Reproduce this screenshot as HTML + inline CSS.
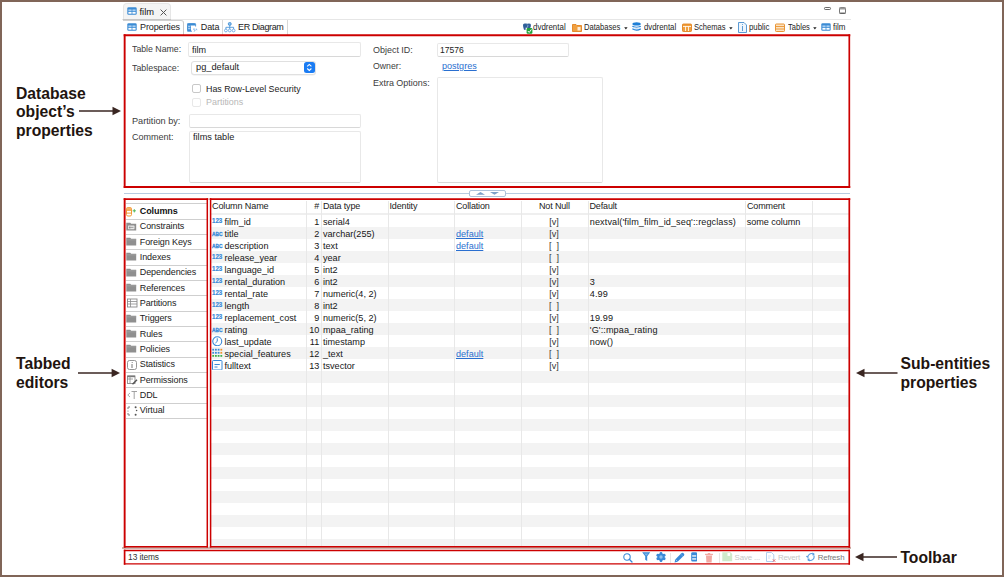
<!DOCTYPE html>
<html><head><meta charset="utf-8"><style>
html,body{margin:0;padding:0;}
body{width:1004px;height:577px;position:relative;overflow:hidden;background:#fff;font-family:"Liberation Sans", sans-serif;}
.frame{position:absolute;left:0;top:0;width:1004px;height:577px;box-sizing:border-box;border:2px solid #806558;z-index:50;pointer-events:none}
.t{position:absolute;white-space:nowrap;line-height:12px;}
.b{position:absolute;}
</style></head><body>
<div class="t" style="left:16.00px;top:87.56px;font-size:15.7px;color:#22140f;font-weight:bold;letter-spacing:0px;">Database</div>
<div class="t" style="left:16.00px;top:106.26px;font-size:15.7px;color:#22140f;font-weight:bold;letter-spacing:0px;">object&#8217;s</div>
<div class="t" style="left:16.00px;top:124.96px;font-size:15.7px;color:#22140f;font-weight:bold;letter-spacing:0px;">properties</div>
<div class="t" style="left:16.00px;top:357.96px;font-size:15.7px;color:#22140f;font-weight:bold;letter-spacing:0px;">Tabbed</div>
<div class="t" style="left:16.00px;top:376.96px;font-size:15.7px;color:#22140f;font-weight:bold;letter-spacing:0px;">editors</div>
<div class="t" style="left:900.50px;top:358.06px;font-size:15.7px;color:#22140f;font-weight:bold;letter-spacing:0px;">Sub-entities</div>
<div class="t" style="left:900.50px;top:377.06px;font-size:15.7px;color:#22140f;font-weight:bold;letter-spacing:0px;">properties</div>
<div class="t" style="left:900.40px;top:552.36px;font-size:15.7px;color:#22140f;font-weight:bold;letter-spacing:0px;">Toolbar</div>
<svg class="b" style="left:79px;top:106.3px" width="42" height="10" viewBox="0 0 42 10"><line x1="0" y1="5" x2="36" y2="5" stroke="#3a2622" stroke-width="1.7"/><path d="M33.5 0.8 L42 5 L33.5 9.2 Z" fill="#3a2622"/></svg>
<svg class="b" style="left:78.4px;top:368.2px" width="42.099999999999994" height="10" viewBox="0 0 42.099999999999994 10"><line x1="0" y1="5" x2="36.099999999999994" y2="5" stroke="#3a2622" stroke-width="1.7"/><path d="M33.599999999999994 0.8 L42.099999999999994 5 L33.599999999999994 9.2 Z" fill="#3a2622"/></svg>
<svg class="b" style="left:856px;top:368.3px" width="41.5" height="10" viewBox="0 0 41.5 10"><line x1="6" y1="5" x2="41.5" y2="5" stroke="#3a2622" stroke-width="1.7"/><path d="M8.5 0.8 L0 5 L8.5 9.2 Z" fill="#3a2622"/></svg>
<svg class="b" style="left:855px;top:552px" width="42" height="10" viewBox="0 0 42 10"><line x1="6" y1="5" x2="42" y2="5" stroke="#3a2622" stroke-width="1.7"/><path d="M8.5 0.8 L0 5 L8.5 9.2 Z" fill="#3a2622"/></svg>
<div class="b" style="left:123px;top:2.5px;width:48px;height:16.5px;background:#f4f4f4;border:1px solid #e6e6e6;border-bottom:none;border-radius:4px 4px 0 0;box-sizing:border-box"></div>
<div class="b" style="left:122px;top:18.5px;width:729px;height:1px;background:#e6e6e6"></div>
<div class="b" style="left:123px;top:19px;width:48px;height:1.5px;background:#c4c4c4"></div>
<svg class="b" style="left:126.7px;top:7.2px" width="10" height="8" viewBox="0 0 10 8"><rect x="0.3" y="0.3" width="9.4" height="7.4" rx="1.3" fill="#3b8bd4"/><rect x="1.4" y="2.4" width="3.2" height="1.9" fill="#a9cff2"/><rect x="5.4" y="2.4" width="3.2" height="1.9" fill="#a9cff2"/><rect x="1.4" y="5" width="3.2" height="1.7" fill="#fff"/><rect x="5.4" y="5" width="3.2" height="1.7" fill="#fff"/></svg>
<div class="t" style="left:139.50px;top:5.58px;font-size:9.3px;color:#111;font-weight:normal;letter-spacing:0px;">film</div>
<svg class="b" style="left:159.5px;top:8.5px" width="7" height="7" viewBox="0 0 7 7"><path d="M0.6 0.6 L6.4 6.4 M6.4 0.6 L0.6 6.4" stroke="#555" stroke-width="1"/></svg>
<div class="b" style="left:824px;top:7px;width:7px;height:3px;border:1px solid #6a6a6a;box-sizing:border-box;border-radius:1.2px"></div>
<svg class="b" style="left:838.5px;top:7px" width="7" height="7" viewBox="0 0 7 7"><rect x="0.5" y="0.5" width="6" height="6" rx="1" fill="#fff" stroke="#777" stroke-width="1"/><rect x="0.5" y="0.5" width="6" height="2" fill="#999"/><rect x="0.5" y="5.6" width="6" height="1" fill="#555"/></svg>
<div class="b" style="left:123px;top:19.5px;width:61px;height:15px;border-right:1px solid #c8c8c8;border-top:1px solid #d0d0d0;border-radius:0 3px 0 0;box-sizing:border-box;background:#fff"></div>
<div class="b" style="left:221.5px;top:20px;width:1px;height:14.5px;background:#d8d8d8"></div>
<div class="b" style="left:287px;top:20px;width:1px;height:14.5px;background:#d8d8d8"></div>
<svg class="b" style="left:126.7px;top:23.2px" width="10" height="8" viewBox="0 0 10 8"><rect x="0.3" y="0.3" width="9.4" height="7.4" rx="1.3" fill="#3b8bd4"/><rect x="1.4" y="2.4" width="3.2" height="1.9" fill="#a9cff2"/><rect x="5.4" y="2.4" width="3.2" height="1.9" fill="#a9cff2"/><rect x="1.4" y="5" width="3.2" height="1.7" fill="#fff"/><rect x="5.4" y="5" width="3.2" height="1.7" fill="#fff"/></svg>
<div class="t" style="left:140.00px;top:21.18px;font-size:9px;color:#222;font-weight:normal;letter-spacing:-0.1px;">Properties</div>
<svg class="b" style="left:186.8px;top:23px" width="11" height="9" viewBox="0 0 11 9"><path d="M0.4 7.6 V1.4 Q0.4 0.4 1.4 0.4 H7.6 Q8.6 0.4 8.6 1.4 V3.5" fill="none" stroke="#3b8bd4" stroke-width="0.9"/><rect x="0.4" y="0.4" width="8.2" height="2" rx="0.8" fill="#3b8bd4"/><rect x="0.4" y="2.4" width="3.6" height="5.8" fill="#3b8bd4"/><rect x="1.1" y="3" width="2.3" height="1.3" fill="#a9cff2"/><rect x="1.1" y="5" width="2.3" height="1.3" fill="#a9cff2"/><path d="M0.4 8.2 H5" stroke="#3b8bd4" stroke-width="0.9"/><path d="M6 6.2 Q7.5 5.5 8.2 6.8 L7.2 8.6 M9.3 5.6 L9.9 7.2" stroke="#5a9ee0" stroke-width="0.8" fill="none"/></svg>
<div class="t" style="left:200.80px;top:21.18px;font-size:9px;color:#222;font-weight:normal;letter-spacing:-0.1px;">Data</div>
<svg class="b" style="left:224px;top:22px" width="11.5" height="10.5" viewBox="0 0 11.5 10.5"><circle cx="5.75" cy="1.9" r="1.5" fill="#8cc0ee" stroke="#3b8bd4" stroke-width="0.8"/><path d="M5.75 3.4 V5.3 M1.9 7.2 V5.3 H9.6 V7.2 M5.75 5.3 V7.2" stroke="#3b8bd4" stroke-width="0.8" fill="none"/><circle cx="1.9" cy="8.5" r="1.4" fill="#fff" stroke="#5a9ee0" stroke-width="0.8"/><circle cx="5.75" cy="8.5" r="1.4" fill="#fff" stroke="#5a9ee0" stroke-width="0.8"/><circle cx="9.6" cy="8.5" r="1.4" fill="#fff" stroke="#5a9ee0" stroke-width="0.8"/></svg>
<div class="t" style="left:238.00px;top:21.18px;font-size:9px;color:#222;font-weight:normal;letter-spacing:-0.35px;">ER Diagram</div>
<svg class="b" style="left:521.5px;top:22.5px" width="11" height="11" viewBox="0 0 11 11"><path d="M1 2 Q1 0.3 3 0.5 Q4.5 0.2 5.5 0.8 Q7 0.2 8.3 0.8 Q9.3 1.6 8.8 3.5 Q8.5 5 7.5 5.5 L7 7 L5.6 6.8 L5.5 4.5 Q4.5 4.8 3.8 4.5 L3.5 7 L2 6.8 Q1 4.5 1 2 Z" fill="#2f5f9a"/><path d="M5.2 1.6 Q6.5 2.5 5.5 4" stroke="#cfe0f2" stroke-width="0.6" fill="none"/><rect x="4.6" y="5" width="5.8" height="5.8" rx="1.2" fill="#22a33a"/><path d="M5.8 8 L7.2 9.4 L9.4 6.5" stroke="#fff" stroke-width="1" fill="none"/></svg>
<div class="t" style="left:532.80px;top:22.16px;font-size:8.2px;color:#1e1e1e;font-weight:normal;letter-spacing:0px;transform:scaleX(0.9691);transform-origin:0 0;">dvdrental</div>
<svg class="b" style="left:571.7px;top:23px" width="10" height="9" viewBox="0 0 10 9"><path d="M0.5 1.5 H4 L5 2.5 H9.5 V8.5 H0.5 Z" fill="#f0a040" stroke="#e07a10" stroke-width="0.8"/><rect x="5.5" y="4" width="3" height="3.5" fill="#fff" opacity=".8"/></svg>
<div class="t" style="left:583.70px;top:22.16px;font-size:8.2px;color:#1e1e1e;font-weight:normal;letter-spacing:0px;transform:scaleX(0.9287);transform-origin:0 0;">Databases</div>
<svg class="b" style="left:624px;top:26.6px" width="4" height="3" viewBox="0 0 4 3"><path d="M0.2 0.2 H3.6 L1.9 2.6 Z" fill="#222"/></svg>
<svg class="b" style="left:631.8px;top:22.4px" width="9.2" height="9.8" viewBox="0 0 9.2 9.8"><ellipse cx="4.6" cy="1.9" rx="4.2" ry="1.6" fill="#1f7fd6"/><path d="M0.4 4.2 Q4.6 6.6 8.8 4.2" stroke="#1f7fd6" stroke-width="1.2" fill="none"/><path d="M0.4 6.8 Q4.6 9.4 8.8 6.8" stroke="#1f7fd6" stroke-width="1.3" fill="none"/><path d="M1 4.8 Q4.6 6.2 8.2 4.8 V6 Q4.6 7.6 1 6 Z" fill="#c6def5"/></svg>
<div class="t" style="left:643.70px;top:22.16px;font-size:8.2px;color:#1e1e1e;font-weight:normal;letter-spacing:0px;transform:scaleX(0.9543);transform-origin:0 0;">dvdrental</div>
<svg class="b" style="left:682.2px;top:23px" width="10" height="9" viewBox="0 0 10 9"><rect x="0.5" y="1" width="9" height="7.5" rx="0.8" fill="#f0a040" stroke="#e07a10" stroke-width="0.8"/><path d="M1 3.5 H9 M3.5 3.5 V8 M6.5 3.5 V8" stroke="#fff" stroke-width="0.8"/></svg>
<div class="t" style="left:694.40px;top:22.16px;font-size:8.2px;color:#1e1e1e;font-weight:normal;letter-spacing:0px;transform:scaleX(0.9271);transform-origin:0 0;">Schemas</div>
<svg class="b" style="left:729px;top:26.6px" width="4" height="3" viewBox="0 0 4 3"><path d="M0.2 0.2 H3.6 L1.9 2.6 Z" fill="#222"/></svg>
<svg class="b" style="left:737.7px;top:22px" width="9" height="11" viewBox="0 0 9 11"><path d="M0.5 0.5 H6 L8.5 3 V10.5 H0.5 Z" fill="#eef5fc" stroke="#4a90d0" stroke-width="0.9"/><path d="M4.5 4 V9" stroke="#4a90d0" stroke-width="0.9"/><circle cx="4.5" cy="2.6" r="0.5" fill="#4a90d0"/></svg>
<div class="t" style="left:748.50px;top:22.16px;font-size:8.2px;color:#1e1e1e;font-weight:normal;letter-spacing:0px;transform:scaleX(0.9607);transform-origin:0 0;">public</div>
<svg class="b" style="left:775.4px;top:23px" width="10" height="9" viewBox="0 0 10 9"><rect x="0.5" y="1" width="9" height="7.5" rx="0.8" fill="#fbe3c4" stroke="#e88a20" stroke-width="0.9"/><path d="M1 3.5 H9 M1 6 H9" stroke="#e88a20" stroke-width="0.8"/></svg>
<div class="t" style="left:787.60px;top:22.16px;font-size:8.2px;color:#1e1e1e;font-weight:normal;letter-spacing:0px;transform:scaleX(0.9241);transform-origin:0 0;">Tables</div>
<svg class="b" style="left:813px;top:26.6px" width="4" height="3" viewBox="0 0 4 3"><path d="M0.2 0.2 H3.6 L1.9 2.6 Z" fill="#222"/></svg>
<svg class="b" style="left:821.1px;top:23.3px" width="10" height="8" viewBox="0 0 10 8"><rect x="0.3" y="0.3" width="9.4" height="7.4" rx="1.3" fill="#3b8bd4"/><rect x="1.4" y="2.4" width="3.2" height="1.9" fill="#a9cff2"/><rect x="5.4" y="2.4" width="3.2" height="1.9" fill="#a9cff2"/><rect x="1.4" y="5" width="3.2" height="1.7" fill="#fff"/><rect x="5.4" y="5" width="3.2" height="1.7" fill="#fff"/></svg>
<div class="t" style="left:833.00px;top:22.16px;font-size:8.2px;color:#1e1e1e;font-weight:normal;letter-spacing:0px;transform:scaleX(0.9803);transform-origin:0 0;">film</div>
<div class="t" style="left:132.00px;top:43.40px;font-size:9.8px;color:#3c3c3c;font-weight:normal;letter-spacing:0px;transform:scaleX(0.8941);transform-origin:0 0;">Table Name:</div>
<div class="b" style="left:188px;top:42px;width:173px;height:14.5px;border:1px solid #e8e8e8;border-bottom-color:#d8d8d8;border-radius:2px;box-sizing:border-box;background:#fff"></div>
<div class="t" style="left:191.70px;top:43.60px;font-size:9.8px;color:#222;font-weight:normal;letter-spacing:0px;transform:scaleX(0.9253);transform-origin:0 0;">film</div>
<div class="t" style="left:132.00px;top:62.00px;font-size:9.8px;color:#3c3c3c;font-weight:normal;letter-spacing:0px;transform:scaleX(0.9028);transform-origin:0 0;">Tablespace:</div>
<div class="b" style="left:190.5px;top:60.5px;width:125px;height:14px;border:1px solid #e0e0e0;border-radius:3px;box-sizing:border-box;background:#fff;box-shadow:0 0.5px 0.5px rgba(0,0,0,.08)"></div>
<div class="t" style="left:196.30px;top:60.90px;font-size:9.8px;color:#222;font-weight:normal;letter-spacing:0px;transform:scaleX(0.9439);transform-origin:0 0;">pg_default</div>
<div class="b" style="left:304px;top:62px;width:10.6px;height:10.6px;background:#1b7cf3;border-radius:2.5px"></div>
<svg class="b" style="left:304px;top:62px" width="11" height="11" viewBox="0 0 11 11"><path d="M3.2 4.3 L5.3 2.4 L7.4 4.3 M3.2 6.5 L5.3 8.4 L7.4 6.5" stroke="#fff" stroke-width="1.1" fill="none"/></svg>
<div class="b" style="left:192px;top:84px;width:9px;height:9px;border:1px solid #c8c8c8;border-radius:2px;box-sizing:border-box;background:#fff"></div>
<div class="t" style="left:205.70px;top:82.90px;font-size:9.8px;color:#222;font-weight:normal;letter-spacing:0px;transform:scaleX(0.9047);transform-origin:0 0;">Has Row-Level Security</div>
<div class="b" style="left:192px;top:97.5px;width:9px;height:9px;border:1px solid #e8e8e8;border-radius:2px;box-sizing:border-box;background:#fff"></div>
<div class="t" style="left:205.70px;top:96.20px;font-size:9.8px;color:#b8b8b8;font-weight:normal;letter-spacing:0px;transform:scaleX(0.9127);transform-origin:0 0;">Partitions</div>
<div class="t" style="left:131.50px;top:115.10px;font-size:9.8px;color:#3c3c3c;font-weight:normal;letter-spacing:0px;transform:scaleX(0.9354);transform-origin:0 0;">Partition by:</div>
<div class="b" style="left:189px;top:113.5px;width:172px;height:14px;border:1px solid #e8e8e8;border-bottom-color:#d8d8d8;border-radius:2px;box-sizing:border-box;background:#fff"></div>
<div class="t" style="left:131.50px;top:131.20px;font-size:9.8px;color:#3c3c3c;font-weight:normal;letter-spacing:0px;transform:scaleX(0.9208);transform-origin:0 0;">Comment:</div>
<div class="b" style="left:189px;top:131px;width:172px;height:52px;border:1px solid #e8e8e8;border-bottom-color:#d8d8d8;border-radius:2px;box-sizing:border-box;background:#fff"></div>
<div class="t" style="left:192.70px;top:131.10px;font-size:9.8px;color:#222;font-weight:normal;letter-spacing:0px;transform:scaleX(0.9365);transform-origin:0 0;">films table</div>
<div class="t" style="left:372.80px;top:43.60px;font-size:9.8px;color:#3c3c3c;font-weight:normal;letter-spacing:0px;transform:scaleX(0.9137);transform-origin:0 0;">Object ID:</div>
<div class="b" style="left:437px;top:42.5px;width:132px;height:14px;border:1px solid #e8e8e8;border-bottom-color:#d8d8d8;border-radius:2px;box-sizing:border-box;background:#fff"></div>
<div class="t" style="left:440.30px;top:43.80px;font-size:9.8px;color:#222;font-weight:normal;letter-spacing:0px;transform:scaleX(0.8699);transform-origin:0 0;">17576</div>
<div class="t" style="left:372.80px;top:60.40px;font-size:9.8px;color:#3c3c3c;font-weight:normal;letter-spacing:0px;transform:scaleX(0.8891);transform-origin:0 0;">Owner:</div>
<div class="t" style="left:442.40px;top:60.10px;font-size:9.8px;color:#2a6fd0;font-weight:normal;letter-spacing:0px;text-decoration:underline;transform:scaleX(0.9233);transform-origin:0 0;">postgres</div>
<div class="t" style="left:372.80px;top:76.60px;font-size:9.8px;color:#3c3c3c;font-weight:normal;letter-spacing:0px;transform:scaleX(0.9133);transform-origin:0 0;">Extra Options:</div>
<div class="b" style="left:437px;top:76.5px;width:166px;height:106px;border:1px solid #e8e8e8;border-bottom-color:#d8d8d8;border-radius:2px;box-sizing:border-box;background:#fff"></div>
<div class="b" style="left:124px;top:193px;width:726px;height:1px;background:#b8cbe0"></div>
<div class="b" style="left:469.2px;top:190px;width:36.6px;height:6.8px;border:1px solid #adc2da;border-radius:2px;box-sizing:border-box;background:#fff"></div>
<svg class="b" style="left:476px;top:192px" width="23" height="3" viewBox="0 0 23 3"><path d="M0 2.7 L4.5 0 L9 2.7 Z M14 0 H23 L18.5 2.7 Z" fill="#7ea0c8"/></svg>
<div class="b" style="left:126px;top:203.2px;width:81px;height:1px;background:#cfcfcf"></div>
<div class="t" style="left:139.80px;top:204.88px;font-size:9px;color:#111;font-weight:bold;letter-spacing:-0.1px;">Columns</div>
<svg class="b" style="left:126px;top:207.0px" width="11" height="10" viewBox="0 0 11 10"><rect x="0.5" y="0.5" width="5" height="8.5" rx="1.4" fill="#fff" stroke="#f29a35" stroke-width="1"/><rect x="0.5" y="0.5" width="5" height="2.6" rx="1" fill="#f6b46a"/><path d="M0.5 3.3 H5.5 M0.5 6.1 H5.5" stroke="#f29a35" stroke-width="1"/><path d="M8.3 2.2 V5.4 M6.7 3.8 H9.9" stroke="#52b85a" stroke-width="1"/></svg>
<div class="b" style="left:126px;top:218.54999999999998px;width:81px;height:1px;background:#cfcfcf"></div>
<div class="t" style="left:139.80px;top:220.23px;font-size:9px;color:#222;font-weight:normal;letter-spacing:-0.1px;">Constraints</div>
<svg class="b" style="left:126.3px;top:221.54999999999998px" width="11" height="10" viewBox="0 0 11 10"><path d="M0.3 0.8 H4.2 L5.2 1.8 H10.2 V8.6 H0.3 Z" fill="#8f8f8f"/><rect x="2" y="3.6" width="6.5" height="3.6" rx="0.6" fill="#e6e6e6"/><circle cx="3.8" cy="5.4" r="1" fill="#8f8f8f"/><path d="M4.8 5.4 H7.5" stroke="#8f8f8f" stroke-width="0.8"/></svg>
<div class="b" style="left:126px;top:233.89999999999998px;width:81px;height:1px;background:#cfcfcf"></div>
<div class="t" style="left:139.80px;top:235.58px;font-size:9px;color:#222;font-weight:normal;letter-spacing:-0.1px;">Foreign Keys</div>
<svg class="b" style="left:126.3px;top:236.89999999999998px" width="11" height="10" viewBox="0 0 11 10"><path d="M0.3 0.8 H4.2 L5.2 1.8 H10.2 V8.6 H0.3 Z" fill="#8f8f8f"/><rect x="0.3" y="2.6" width="9.9" height="0.6" fill="#a8a8a8"/></svg>
<div class="b" style="left:126px;top:249.25px;width:81px;height:1px;background:#cfcfcf"></div>
<div class="t" style="left:139.80px;top:250.93px;font-size:9px;color:#222;font-weight:normal;letter-spacing:-0.1px;">Indexes</div>
<svg class="b" style="left:126.3px;top:252.25px" width="11" height="10" viewBox="0 0 11 10"><path d="M0.3 0.8 H4.2 L5.2 1.8 H10.2 V8.6 H0.3 Z" fill="#8f8f8f"/><rect x="0.3" y="2.6" width="9.9" height="0.6" fill="#a8a8a8"/></svg>
<div class="b" style="left:126px;top:264.59999999999997px;width:81px;height:1px;background:#cfcfcf"></div>
<div class="t" style="left:139.80px;top:266.28px;font-size:9px;color:#222;font-weight:normal;letter-spacing:-0.1px;">Dependencies</div>
<svg class="b" style="left:126.3px;top:267.59999999999997px" width="11" height="10" viewBox="0 0 11 10"><path d="M0.3 0.8 H4.2 L5.2 1.8 H10.2 V8.6 H0.3 Z" fill="#8f8f8f"/><rect x="0.3" y="2.6" width="9.9" height="0.6" fill="#a8a8a8"/></svg>
<div class="b" style="left:126px;top:279.95px;width:81px;height:1px;background:#cfcfcf"></div>
<div class="t" style="left:139.80px;top:281.63px;font-size:9px;color:#222;font-weight:normal;letter-spacing:-0.1px;">References</div>
<svg class="b" style="left:126.3px;top:282.95px" width="11" height="10" viewBox="0 0 11 10"><path d="M0.3 0.8 H4.2 L5.2 1.8 H10.2 V8.6 H0.3 Z" fill="#8f8f8f"/><rect x="0.3" y="2.6" width="9.9" height="0.6" fill="#a8a8a8"/></svg>
<div class="b" style="left:126px;top:295.29999999999995px;width:81px;height:1px;background:#cfcfcf"></div>
<div class="t" style="left:139.80px;top:296.98px;font-size:9px;color:#222;font-weight:normal;letter-spacing:-0.1px;">Partitions</div>
<svg class="b" style="left:126.5px;top:298.29999999999995px" width="11" height="10" viewBox="0 0 11 10"><rect x="0.5" y="1" width="9.5" height="8" fill="none" stroke="#8a8a8a" stroke-width="0.9"/><path d="M0.5 3.5 H10 M0.5 6 H10 M3.5 1 V9" stroke="#8a8a8a" stroke-width="0.8"/></svg>
<div class="b" style="left:126px;top:310.65px;width:81px;height:1px;background:#cfcfcf"></div>
<div class="t" style="left:139.80px;top:312.33px;font-size:9px;color:#222;font-weight:normal;letter-spacing:-0.1px;">Triggers</div>
<svg class="b" style="left:126.3px;top:313.65px" width="11" height="10" viewBox="0 0 11 10"><path d="M0.3 0.8 H4.2 L5.2 1.8 H10.2 V8.6 H0.3 Z" fill="#8f8f8f"/><rect x="0.3" y="2.6" width="9.9" height="0.6" fill="#a8a8a8"/></svg>
<div class="b" style="left:126px;top:326.0px;width:81px;height:1px;background:#cfcfcf"></div>
<div class="t" style="left:139.80px;top:327.68px;font-size:9px;color:#222;font-weight:normal;letter-spacing:-0.1px;">Rules</div>
<svg class="b" style="left:126.3px;top:329.0px" width="11" height="10" viewBox="0 0 11 10"><path d="M0.3 0.8 H4.2 L5.2 1.8 H10.2 V8.6 H0.3 Z" fill="#8f8f8f"/><rect x="0.3" y="2.6" width="9.9" height="0.6" fill="#a8a8a8"/></svg>
<div class="b" style="left:126px;top:341.35px;width:81px;height:1px;background:#cfcfcf"></div>
<div class="t" style="left:139.80px;top:343.03px;font-size:9px;color:#222;font-weight:normal;letter-spacing:-0.1px;">Policies</div>
<svg class="b" style="left:126.3px;top:344.35px" width="11" height="10" viewBox="0 0 11 10"><path d="M0.3 0.8 H4.2 L5.2 1.8 H10.2 V8.6 H0.3 Z" fill="#8f8f8f"/><rect x="0.3" y="2.6" width="9.9" height="0.6" fill="#a8a8a8"/></svg>
<div class="b" style="left:126px;top:356.7px;width:81px;height:1px;background:#cfcfcf"></div>
<div class="t" style="left:139.80px;top:358.38px;font-size:9px;color:#222;font-weight:normal;letter-spacing:-0.1px;">Statistics</div>
<svg class="b" style="left:126.5px;top:359.7px" width="11" height="10" viewBox="0 0 11 10"><rect x="0.5" y="0.5" width="9" height="9" rx="2" fill="none" stroke="#8a8a8a" stroke-width="0.9"/><path d="M5 4 V8" stroke="#777" stroke-width="1"/><circle cx="5.2" cy="2.5" r="0.6" fill="#777"/></svg>
<div class="b" style="left:126px;top:372.04999999999995px;width:81px;height:1px;background:#cfcfcf"></div>
<div class="t" style="left:139.80px;top:373.73px;font-size:9px;color:#222;font-weight:normal;letter-spacing:-0.1px;">Permissions</div>
<svg class="b" style="left:126.5px;top:375.04999999999995px" width="11" height="10" viewBox="0 0 11 10"><rect x="0.5" y="1" width="7.5" height="7.5" fill="none" stroke="#8a8a8a" stroke-width="0.9"/><rect x="0.5" y="0.6" width="7.5" height="1.6" fill="#777"/><path d="M0.5 4 H6 M3 1 V8.5" stroke="#8a8a8a" stroke-width="0.8"/><path d="M5.5 9.2 L10 4.8" stroke="#555" stroke-width="1.4"/></svg>
<div class="b" style="left:126px;top:387.4px;width:81px;height:1px;background:#cfcfcf"></div>
<div class="t" style="left:139.80px;top:389.08px;font-size:9px;color:#222;font-weight:normal;letter-spacing:-0.1px;">DDL</div>
<svg class="b" style="left:126.5px;top:390.4px" width="11" height="10" viewBox="0 0 11 10"><path d="M3 3 L0.8 5 L3 7" stroke="#999" stroke-width="0.8" fill="none"/><path d="M4.5 1.5 H10 M7.2 1.5 V9" stroke="#999" stroke-width="0.9"/></svg>
<div class="b" style="left:126px;top:402.75px;width:81px;height:1px;background:#cfcfcf"></div>
<div class="t" style="left:139.80px;top:404.43px;font-size:9px;color:#222;font-weight:normal;letter-spacing:-0.1px;">Virtual</div>
<svg class="b" style="left:126.5px;top:405.75px" width="11" height="10" viewBox="0 0 11 10"><path d="M1 3 V1.5 Q1 1 1.5 1 H3 M3 9 H1.5 Q1 9 1 8.5 V7" stroke="#666" stroke-width="0.9" fill="none"/><circle cx="8.6" cy="1.2" r="1" fill="#555"/><circle cx="9.6" cy="4.5" r="0.8" fill="#555"/><circle cx="8.6" cy="8.8" r="1" fill="#555"/><circle cx="1" cy="5" r="0.6" fill="#777"/></svg>
<div class="b" style="left:126px;top:418.1px;width:81px;height:1px;background:#cfcfcf"></div>
<div class="b" style="left:211px;top:227px;width:638px;height:12px;background:#f3f3f3"></div>
<div class="b" style="left:211px;top:251px;width:638px;height:12px;background:#f3f3f3"></div>
<div class="b" style="left:211px;top:275px;width:638px;height:12px;background:#f3f3f3"></div>
<div class="b" style="left:211px;top:299px;width:638px;height:12px;background:#f3f3f3"></div>
<div class="b" style="left:211px;top:323px;width:638px;height:12px;background:#f3f3f3"></div>
<div class="b" style="left:211px;top:347px;width:638px;height:12px;background:#f3f3f3"></div>
<div class="b" style="left:211px;top:371px;width:638px;height:12px;background:#f3f3f3"></div>
<div class="b" style="left:211px;top:395px;width:638px;height:12px;background:#f3f3f3"></div>
<div class="b" style="left:211px;top:419px;width:638px;height:12px;background:#f3f3f3"></div>
<div class="b" style="left:211px;top:443px;width:638px;height:12px;background:#f3f3f3"></div>
<div class="b" style="left:211px;top:467px;width:638px;height:12px;background:#f3f3f3"></div>
<div class="b" style="left:211px;top:491px;width:638px;height:12px;background:#f3f3f3"></div>
<div class="b" style="left:211px;top:515px;width:638px;height:12px;background:#f3f3f3"></div>
<div class="b" style="left:211px;top:539px;width:638px;height:7px;background:#f3f3f3"></div>
<div class="b" style="left:211px;top:213px;width:638px;height:1.5px;background:#efefef"></div>
<div class="b" style="left:306px;top:201px;width:1px;height:345px;background:#e8e8e8"></div>
<div class="b" style="left:321px;top:201px;width:1px;height:345px;background:#e8e8e8"></div>
<div class="b" style="left:388px;top:201px;width:1px;height:345px;background:#e8e8e8"></div>
<div class="b" style="left:454px;top:201px;width:1px;height:345px;background:#e8e8e8"></div>
<div class="b" style="left:521px;top:201px;width:1px;height:345px;background:#e8e8e8"></div>
<div class="b" style="left:588px;top:201px;width:1px;height:345px;background:#e8e8e8"></div>
<div class="b" style="left:745px;top:201px;width:1px;height:345px;background:#e8e8e8"></div>
<div class="b" style="left:812px;top:201px;width:1px;height:345px;background:#e8e8e8"></div>
<div class="t" style="left:212.00px;top:199.65px;font-size:9.1px;color:#222;font-weight:normal;letter-spacing:-0.15px;">Column Name</div>
<div class="t" style="left:314.30px;top:199.68px;font-size:9px;color:#222;font-weight:normal;letter-spacing:0px;">#</div>
<div class="t" style="left:323.00px;top:199.68px;font-size:9px;color:#222;font-weight:normal;letter-spacing:-0.15px;">Data type</div>
<div class="t" style="left:389.50px;top:199.68px;font-size:9px;color:#222;font-weight:normal;letter-spacing:-0.15px;">Identity</div>
<div class="t" style="left:456.00px;top:199.68px;font-size:9px;color:#222;font-weight:normal;letter-spacing:-0.15px;">Collation</div>
<div class="t" style="left:539.00px;top:199.68px;font-size:9px;color:#222;font-weight:normal;letter-spacing:-0.15px;">Not Null</div>
<div class="t" style="left:589.50px;top:199.68px;font-size:9px;color:#222;font-weight:normal;letter-spacing:-0.15px;">Default</div>
<div class="t" style="left:747.00px;top:199.68px;font-size:9px;color:#222;font-weight:normal;letter-spacing:-0.15px;">Comment</div>
<div class="t" style="left:212.30px;top:215.42px;font-size:6.3px;color:#3a8ad8;font-weight:bold;letter-spacing:0px;-webkit-text-stroke:0.2px #3a8ad8;transform:scaleX(0.979);transform-origin:0 0;">123</div>
<div class="t" style="left:224.50px;top:215.85px;font-size:9.1px;color:#161616;font-weight:normal;letter-spacing:0px;">film_id</div>
<div class="t" style="left:290px;width:29.3px;text-align:right;top:215.50px;font-size:9.1px;color:#161616">1</div>
<div class="t" style="left:323.00px;top:215.85px;font-size:9.1px;color:#161616;font-weight:normal;letter-spacing:0px;">serial4</div>
<div class="t" style="left:534px;width:40px;text-align:center;top:215.50px;font-size:9.1px;color:#333;white-space:pre">[v]</div>
<div class="t" style="left:589.80px;top:215.85px;font-size:9.1px;color:#161616;font-weight:normal;letter-spacing:0.1px;">nextval('film_film_id_seq'::regclass)</div>
<div class="t" style="left:746.80px;top:215.85px;font-size:9.1px;color:#161616;font-weight:normal;letter-spacing:-0.05px;">some column</div>
<div class="t" style="left:212.20px;top:227.59px;font-size:6.1px;color:#3a8ad8;font-weight:bold;letter-spacing:0px;-webkit-text-stroke:0.35px #3a8ad8;transform:scaleX(0.7951);transform-origin:0 0;">ABC</div>
<div class="t" style="left:224.50px;top:227.85px;font-size:9.1px;color:#161616;font-weight:normal;letter-spacing:0px;">title</div>
<div class="t" style="left:290px;width:29.3px;text-align:right;top:227.50px;font-size:9.1px;color:#161616">2</div>
<div class="t" style="left:323.00px;top:227.85px;font-size:9.1px;color:#161616;font-weight:normal;letter-spacing:0px;">varchar(255)</div>
<div class="t" style="left:456.00px;top:227.85px;font-size:9.1px;color:#2a6fd0;font-weight:normal;letter-spacing:0px;text-decoration:underline">default</div>
<div class="t" style="left:534px;width:40px;text-align:center;top:227.50px;font-size:9.1px;color:#333;white-space:pre">[v]</div>
<div class="t" style="left:212.20px;top:239.59px;font-size:6.1px;color:#3a8ad8;font-weight:bold;letter-spacing:0px;-webkit-text-stroke:0.35px #3a8ad8;transform:scaleX(0.7951);transform-origin:0 0;">ABC</div>
<div class="t" style="left:224.50px;top:239.85px;font-size:9.1px;color:#161616;font-weight:normal;letter-spacing:0px;">description</div>
<div class="t" style="left:290px;width:29.3px;text-align:right;top:239.50px;font-size:9.1px;color:#161616">3</div>
<div class="t" style="left:323.00px;top:239.85px;font-size:9.1px;color:#161616;font-weight:normal;letter-spacing:0px;">text</div>
<div class="t" style="left:456.00px;top:239.85px;font-size:9.1px;color:#2a6fd0;font-weight:normal;letter-spacing:0px;text-decoration:underline">default</div>
<div class="t" style="left:534px;width:40px;text-align:center;top:239.50px;font-size:9.1px;color:#333;white-space:pre">[  ]</div>
<div class="t" style="left:212.30px;top:251.42px;font-size:6.3px;color:#3a8ad8;font-weight:bold;letter-spacing:0px;-webkit-text-stroke:0.2px #3a8ad8;transform:scaleX(0.979);transform-origin:0 0;">123</div>
<div class="t" style="left:224.50px;top:251.85px;font-size:9.1px;color:#161616;font-weight:normal;letter-spacing:0px;">release_year</div>
<div class="t" style="left:290px;width:29.3px;text-align:right;top:251.50px;font-size:9.1px;color:#161616">4</div>
<div class="t" style="left:323.00px;top:251.85px;font-size:9.1px;color:#161616;font-weight:normal;letter-spacing:0px;">year</div>
<div class="t" style="left:534px;width:40px;text-align:center;top:251.50px;font-size:9.1px;color:#333;white-space:pre">[  ]</div>
<div class="t" style="left:212.30px;top:263.42px;font-size:6.3px;color:#3a8ad8;font-weight:bold;letter-spacing:0px;-webkit-text-stroke:0.2px #3a8ad8;transform:scaleX(0.979);transform-origin:0 0;">123</div>
<div class="t" style="left:224.50px;top:263.85px;font-size:9.1px;color:#161616;font-weight:normal;letter-spacing:0px;">language_id</div>
<div class="t" style="left:290px;width:29.3px;text-align:right;top:263.50px;font-size:9.1px;color:#161616">5</div>
<div class="t" style="left:323.00px;top:263.85px;font-size:9.1px;color:#161616;font-weight:normal;letter-spacing:0px;">int2</div>
<div class="t" style="left:534px;width:40px;text-align:center;top:263.50px;font-size:9.1px;color:#333;white-space:pre">[v]</div>
<div class="t" style="left:212.30px;top:275.42px;font-size:6.3px;color:#3a8ad8;font-weight:bold;letter-spacing:0px;-webkit-text-stroke:0.2px #3a8ad8;transform:scaleX(0.979);transform-origin:0 0;">123</div>
<div class="t" style="left:224.50px;top:275.85px;font-size:9.1px;color:#161616;font-weight:normal;letter-spacing:0px;">rental_duration</div>
<div class="t" style="left:290px;width:29.3px;text-align:right;top:275.50px;font-size:9.1px;color:#161616">6</div>
<div class="t" style="left:323.00px;top:275.85px;font-size:9.1px;color:#161616;font-weight:normal;letter-spacing:0px;">int2</div>
<div class="t" style="left:534px;width:40px;text-align:center;top:275.50px;font-size:9.1px;color:#333;white-space:pre">[v]</div>
<div class="t" style="left:589.80px;top:275.85px;font-size:9.1px;color:#161616;font-weight:normal;letter-spacing:0.1px;">3</div>
<div class="t" style="left:212.30px;top:287.42px;font-size:6.3px;color:#3a8ad8;font-weight:bold;letter-spacing:0px;-webkit-text-stroke:0.2px #3a8ad8;transform:scaleX(0.979);transform-origin:0 0;">123</div>
<div class="t" style="left:224.50px;top:287.85px;font-size:9.1px;color:#161616;font-weight:normal;letter-spacing:0px;">rental_rate</div>
<div class="t" style="left:290px;width:29.3px;text-align:right;top:287.50px;font-size:9.1px;color:#161616">7</div>
<div class="t" style="left:323.00px;top:287.85px;font-size:9.1px;color:#161616;font-weight:normal;letter-spacing:0px;">numeric(4, 2)</div>
<div class="t" style="left:534px;width:40px;text-align:center;top:287.50px;font-size:9.1px;color:#333;white-space:pre">[v]</div>
<div class="t" style="left:589.80px;top:287.85px;font-size:9.1px;color:#161616;font-weight:normal;letter-spacing:0.1px;">4.99</div>
<div class="t" style="left:212.30px;top:299.42px;font-size:6.3px;color:#3a8ad8;font-weight:bold;letter-spacing:0px;-webkit-text-stroke:0.2px #3a8ad8;transform:scaleX(0.979);transform-origin:0 0;">123</div>
<div class="t" style="left:224.50px;top:299.85px;font-size:9.1px;color:#161616;font-weight:normal;letter-spacing:0px;">length</div>
<div class="t" style="left:290px;width:29.3px;text-align:right;top:299.50px;font-size:9.1px;color:#161616">8</div>
<div class="t" style="left:323.00px;top:299.85px;font-size:9.1px;color:#161616;font-weight:normal;letter-spacing:0px;">int2</div>
<div class="t" style="left:534px;width:40px;text-align:center;top:299.50px;font-size:9.1px;color:#333;white-space:pre">[  ]</div>
<div class="t" style="left:212.30px;top:311.42px;font-size:6.3px;color:#3a8ad8;font-weight:bold;letter-spacing:0px;-webkit-text-stroke:0.2px #3a8ad8;transform:scaleX(0.979);transform-origin:0 0;">123</div>
<div class="t" style="left:224.50px;top:311.85px;font-size:9.1px;color:#161616;font-weight:normal;letter-spacing:0px;">replacement_cost</div>
<div class="t" style="left:290px;width:29.3px;text-align:right;top:311.50px;font-size:9.1px;color:#161616">9</div>
<div class="t" style="left:323.00px;top:311.85px;font-size:9.1px;color:#161616;font-weight:normal;letter-spacing:0px;">numeric(5, 2)</div>
<div class="t" style="left:534px;width:40px;text-align:center;top:311.50px;font-size:9.1px;color:#333;white-space:pre">[v]</div>
<div class="t" style="left:589.80px;top:311.85px;font-size:9.1px;color:#161616;font-weight:normal;letter-spacing:0.1px;">19.99</div>
<div class="t" style="left:212.20px;top:323.59px;font-size:6.1px;color:#3a8ad8;font-weight:bold;letter-spacing:0px;-webkit-text-stroke:0.35px #3a8ad8;transform:scaleX(0.7951);transform-origin:0 0;">ABC</div>
<div class="t" style="left:224.50px;top:323.85px;font-size:9.1px;color:#161616;font-weight:normal;letter-spacing:0px;">rating</div>
<div class="t" style="left:290px;width:29.3px;text-align:right;top:323.50px;font-size:9.1px;color:#161616">10</div>
<div class="t" style="left:323.00px;top:323.85px;font-size:9.1px;color:#161616;font-weight:normal;letter-spacing:0px;">mpaa_rating</div>
<div class="t" style="left:534px;width:40px;text-align:center;top:323.50px;font-size:9.1px;color:#333;white-space:pre">[  ]</div>
<div class="t" style="left:589.80px;top:323.85px;font-size:9.1px;color:#161616;font-weight:normal;letter-spacing:0.1px;">'G'::mpaa_rating</div>
<svg class="b" style="left:212.3px;top:335.8px" width="10.5" height="10.5" viewBox="0 0 10.5 10.5"><circle cx="5.25" cy="5.25" r="4.5" fill="#fff" stroke="#3a8ad8" stroke-width="1.1"/><path d="M5.25 2.3 V5.4 L3.4 7" stroke="#3a8ad8" stroke-width="1" fill="none"/></svg>
<div class="t" style="left:224.50px;top:335.85px;font-size:9.1px;color:#161616;font-weight:normal;letter-spacing:0px;">last_update</div>
<div class="t" style="left:290px;width:29.3px;text-align:right;top:335.50px;font-size:9.1px;color:#161616">11</div>
<div class="t" style="left:323.00px;top:335.85px;font-size:9.1px;color:#161616;font-weight:normal;letter-spacing:0px;">timestamp</div>
<div class="t" style="left:534px;width:40px;text-align:center;top:335.50px;font-size:9.1px;color:#333;white-space:pre">[v]</div>
<div class="t" style="left:589.80px;top:335.85px;font-size:9.1px;color:#161616;font-weight:normal;letter-spacing:0.1px;">now()</div>
<svg class="b" style="left:212.3px;top:348px" width="11" height="10" viewBox="0 0 11 10"><rect x="0.30" y="0.80" width="1.8" height="1.8" fill="#3a8ad8"/><rect x="3.00" y="0.80" width="1.8" height="1.8" fill="#3a8ad8"/><rect x="5.70" y="0.80" width="1.8" height="1.8" fill="#3a8ad8"/><rect x="8.40" y="0.80" width="1.8" height="1.8" fill="#f0922a"/><rect x="0.30" y="3.90" width="1.8" height="1.8" fill="#3a8ad8"/><rect x="3.00" y="3.90" width="1.8" height="1.8" fill="#3a8ad8"/><rect x="5.70" y="3.90" width="1.8" height="1.8" fill="#3a8ad8"/><rect x="8.40" y="3.90" width="1.8" height="1.8" fill="#f0922a"/><rect x="0.30" y="7.00" width="1.8" height="1.8" fill="#3cb04a"/><rect x="3.00" y="7.00" width="1.8" height="1.8" fill="#3cb04a"/><rect x="5.70" y="7.00" width="1.8" height="1.8" fill="#3cb04a"/><rect x="8.40" y="7.00" width="1.8" height="1.8" fill="#3cb04a"/></svg>
<div class="t" style="left:224.50px;top:347.85px;font-size:9.1px;color:#161616;font-weight:normal;letter-spacing:0px;">special_features</div>
<div class="t" style="left:290px;width:29.3px;text-align:right;top:347.50px;font-size:9.1px;color:#161616">12</div>
<div class="t" style="left:323.00px;top:347.85px;font-size:9.1px;color:#161616;font-weight:normal;letter-spacing:0px;">_text</div>
<div class="t" style="left:456.00px;top:347.85px;font-size:9.1px;color:#2a6fd0;font-weight:normal;letter-spacing:0px;text-decoration:underline">default</div>
<div class="t" style="left:534px;width:40px;text-align:center;top:347.50px;font-size:9.1px;color:#333;white-space:pre">[  ]</div>
<svg class="b" style="left:212.3px;top:359.8px" width="10.5" height="10.5" viewBox="0 0 10.5 10.5"><rect x="0.5" y="0.5" width="9.5" height="9.5" rx="0.8" fill="#fff" stroke="#3a8ad8" stroke-width="1"/><path d="M2.5 4.5 H7.8 M2.5 7 H5.5" stroke="#3a8ad8" stroke-width="1"/></svg>
<div class="t" style="left:224.50px;top:359.85px;font-size:9.1px;color:#161616;font-weight:normal;letter-spacing:0px;">fulltext</div>
<div class="t" style="left:290px;width:29.3px;text-align:right;top:359.50px;font-size:9.1px;color:#161616">13</div>
<div class="t" style="left:323.00px;top:359.85px;font-size:9.1px;color:#161616;font-weight:normal;letter-spacing:0px;">tsvector</div>
<div class="t" style="left:534px;width:40px;text-align:center;top:359.50px;font-size:9.1px;color:#333;white-space:pre">[v]</div>
<div class="b" style="left:122px;top:547px;width:729px;height:2px;background:#cbb5ad"></div>
<div class="t" style="left:128.10px;top:551.29px;font-size:8.4px;color:#333;font-weight:normal;letter-spacing:-0.1px;">13 items</div>
<svg class="b" style="left:623px;top:552.5px" width="10" height="10" viewBox="0 0 10 10"><circle cx="4" cy="4" r="3.2" fill="none" stroke="#3a8ad8" stroke-width="1.1"/><path d="M6.3 6.3 L9 9" stroke="#3a8ad8" stroke-width="1.3" stroke-linecap="round"/></svg>
<svg class="b" style="left:642px;top:552px" width="8.5" height="9.5" viewBox="0 0 8.5 9.5"><path d="M0.2 0.3 H8.2 L5.2 4.2 V9 L3.2 7.8 V4.2 Z" fill="#3a8ad8"/><path d="M2 1.5 H6.5 L4.2 3.8 Z" fill="#7fb6ea"/></svg>
<svg class="b" style="left:655.8px;top:552px" width="10" height="10" viewBox="0 0 10 10"><circle cx="5.00" cy="1.40" r="1.45" fill="#3a8ad8"/><circle cx="1.88" cy="3.20" r="1.45" fill="#3a8ad8"/><circle cx="1.88" cy="6.80" r="1.45" fill="#3a8ad8"/><circle cx="5.00" cy="8.60" r="1.45" fill="#3a8ad8"/><circle cx="8.12" cy="6.80" r="1.45" fill="#3a8ad8"/><circle cx="8.12" cy="3.20" r="1.45" fill="#3a8ad8"/><circle cx="5" cy="5" r="3.6" fill="#3a8ad8"/><circle cx="5" cy="5" r="1.7" fill="#8fc0ee"/></svg>
<div class="b" style="left:670.4px;top:552.5px;width:1px;height:10px;background:#e6e6e6"></div>
<svg class="b" style="left:673.8px;top:551.8px" width="11" height="11" viewBox="0 0 11 11"><path d="M0.6 10.4 L1.2 7.4 L7.6 1 Q8.4 0.3 9.2 1 L10 1.8 Q10.7 2.6 10 3.4 L3.6 9.8 Z" fill="#3a8ad8"/><path d="M1.6 7.6 L3.4 9.4" stroke="#fff" stroke-width="0.5"/><path d="M6.6 2 L9 4.4" stroke="#8fc0ee" stroke-width="0.5"/></svg>
<svg class="b" style="left:690.8px;top:552.3px" width="6.5" height="9.8" viewBox="0 0 6.5 9.8"><rect x="0.2" y="0.2" width="6" height="9.4" rx="1.4" fill="#3a8ad8"/><rect x="1.2" y="3.3" width="4" height="1.3" fill="#fff"/><rect x="1.2" y="6.3" width="4" height="1.3" fill="#fff"/></svg>
<svg class="b" style="left:705px;top:552.5px" width="8" height="10" viewBox="0 0 8 10"><rect x="0" y="0.8" width="8" height="1.3" fill="#f2aaa4"/><rect x="2.8" y="0" width="2.4" height="1" fill="#f2aaa4"/><path d="M1 2.6 H7 L6.6 9.5 H1.4 Z" fill="#f2aaa4"/></svg>
<div class="b" style="left:718.8px;top:552.5px;width:1px;height:10px;background:#e6e6e6"></div>
<svg class="b" style="left:722px;top:552.2px" width="10.5" height="9.6" viewBox="0 0 10.5 9.6"><path d="M0.3 0.3 H8.5 L10.2 2 V9.3 H0.3 Z" fill="#cfe9cb"/><rect x="5.5" y="0.9" width="2.6" height="3" fill="#fff"/></svg>
<div class="t" style="left:734.60px;top:551.56px;font-size:7.9px;color:#c6c6c6;font-weight:normal;letter-spacing:-0.15px;">Save ...</div>
<svg class="b" style="left:766.4px;top:552.4px" width="10" height="10" viewBox="0 0 10 10"><path d="M0.5 0.5 H5.5 L7.8 2.8 V9.5 H0.5 Z" fill="#fff" stroke="#a9c9ec" stroke-width="0.9"/><path d="M2 4 H5 M2 6 H4" stroke="#c5dbf2" stroke-width="0.8"/><path d="M6.8 7.3 L9.3 9.8 M9.3 7.3 L6.8 9.8" stroke="#e86a6a" stroke-width="0.9"/></svg>
<div class="t" style="left:777.90px;top:551.56px;font-size:7.9px;color:#c6c6c6;font-weight:normal;letter-spacing:-0.2px;">Revert</div>
<svg class="b" style="left:805.8px;top:552.3px" width="10" height="10" viewBox="0 0 10 10"><path d="M2.2 6.5 A3.6 3.6 0 0 1 7.6 2.2" stroke="#5a9ee0" stroke-width="1.1" fill="none"/><path d="M7.8 3.5 A3.6 3.6 0 0 1 2.4 7.8" stroke="#5a9ee0" stroke-width="1.1" fill="none"/><path d="M6.3 0.6 L8.9 2 L6.8 4 Z M3.7 9.4 L1.1 8 L3.2 6 Z" fill="#5a9ee0"/><circle cx="1" cy="4.5" r="0.7" fill="#2f7fd0"/></svg>
<div class="t" style="left:817.80px;top:551.56px;font-size:7.9px;color:#777;font-weight:normal;letter-spacing:-0.15px;">Refresh</div>
<svg class="b" style="left:0;top:0;z-index:40" width="1004" height="577" viewBox="0 0 1004 577"><line x1="124.65" y1="35.2" x2="849.3" y2="35.2" stroke="#cc0000" stroke-width="1.9" stroke-linecap="square"/><line x1="849.3" y1="35.2" x2="849.3" y2="187.0" stroke="#cc0000" stroke-width="1.7" stroke-linecap="square"/><line x1="124.65" y1="187.0" x2="849.3" y2="187.0" stroke="#cc0000" stroke-width="1.9" stroke-linecap="square"/><line x1="124.65" y1="35.2" x2="124.65" y2="187.0" stroke="#cc0000" stroke-width="1.9" stroke-linecap="square"/><line x1="124.65" y1="199.1" x2="207.3" y2="199.1" stroke="#cc0000" stroke-width="1.9" stroke-linecap="square"/><line x1="207.3" y1="199.1" x2="207.3" y2="546.8" stroke="#cc0000" stroke-width="1.5" stroke-linecap="square"/><line x1="124.65" y1="546.8" x2="207.3" y2="546.8" stroke="#cc0000" stroke-width="1.5" stroke-linecap="square"/><line x1="124.65" y1="199.1" x2="124.65" y2="546.8" stroke="#cc0000" stroke-width="1.9" stroke-linecap="square"/><line x1="210.6" y1="199.1" x2="849.3" y2="199.1" stroke="#cc0000" stroke-width="1.9" stroke-linecap="square"/><line x1="849.3" y1="199.1" x2="849.3" y2="546.8" stroke="#cc0000" stroke-width="1.7" stroke-linecap="square"/><line x1="210.6" y1="546.8" x2="849.3" y2="546.8" stroke="#cc0000" stroke-width="1.5" stroke-linecap="square"/><line x1="210.6" y1="199.1" x2="210.6" y2="546.8" stroke="#cc0000" stroke-width="1.5" stroke-linecap="square"/><line x1="124.6" y1="550.5" x2="849.25" y2="550.5" stroke="#cc0000" stroke-width="1.4" stroke-linecap="square"/><line x1="849.25" y1="550.5" x2="849.25" y2="563.9" stroke="#cc0000" stroke-width="1.6" stroke-linecap="square"/><line x1="124.6" y1="563.9" x2="849.25" y2="563.9" stroke="#cc0000" stroke-width="1.4" stroke-linecap="square"/><line x1="124.6" y1="550.5" x2="124.6" y2="563.9" stroke="#cc0000" stroke-width="1.7" stroke-linecap="square"/></svg>
<div class="frame"></div>
</body></html>
